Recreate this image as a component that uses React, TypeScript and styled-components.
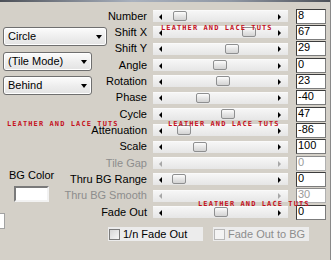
import React from "react";
import styled, { createGlobalStyle } from "styled-components";

const GlobalStyle = createGlobalStyle`
  html, body {
    margin: 0;
    padding: 0;
    background: #d4d0c8;
  }
  body {
    font-family: "Liberation Sans", Arial, sans-serif;
    font-size: 11px;
    color: #000;
  }
`;

const Page = styled.div`
  position: relative;
  width: 331px;
  height: 260px;
  box-sizing: border-box;
  background: #d4d0c8;
  border-right: 1px solid #8a8a8a;
  overflow: hidden;
`;

const TopEdge = styled.div`
  height: 2px;
  background: linear-gradient(90deg, #4c5058, #a9b1be 40%, #8f97a4 70%, #4c5058);
`;

const Grid = styled.div`
  display: grid;
  grid-template-columns: 147px 135px 32px;
  grid-template-rows: repeat(13, 16.33px);
  column-gap: 6px;
  margin-top: 6px;
`;

const LeftStack = styled.div`
  grid-column: 1;
  grid-row: 1 / span 13;
  align-self: start;
  display: flex;
  flex-direction: column;
  align-items: flex-start;
  padding-top: 19px;
`;

const Select = styled.div<{ $w: number; $gap: number }>`
  display: flex;
  align-items: center;
  justify-content: space-between;
  width: ${(p) => p.$w}px;
  height: 19px;
  box-sizing: border-box;
  margin: ${(p) => p.$gap}px 0 0 3px;
  padding: 0 4px 0 4px;
  border: 1px solid #6f6f6f;
  border-radius: 3px;
  background: linear-gradient(#fcfcfc, #ededed 55%, #e3e3e3);
  box-shadow: inset 0 0 0 1px #ffffff;
  line-height: 13px;
`;

const DownArrow = styled.span`
  width: 0;
  height: 0;
  border-top: 4px solid #000;
  border-left: 3.5px solid transparent;
  border-right: 3.5px solid transparent;
`;

const ColorBlock = styled.div`
  display: flex;
  flex-direction: column;
  align-items: center;
  gap: 4px;
  margin: 74px 0 0 9px;
  line-height: 13px;
`;

const ColorWell = styled.div`
  width: 35px;
  height: 16px;
  box-sizing: border-box;
  background: #fff;
  border: 2px solid;
  border-color: #7a7a7a #f2f2f2 #f2f2f2 #7a7a7a;
`;

const CutBox = styled.div`
  width: 5px;
  height: 16px;
  box-sizing: border-box;
  margin-top: 11px;
  background: #fff;
  border: 1px solid #a2a2a2;
  border-left: none;
`;

const Label = styled.div<{ $row: number; $disabled?: boolean }>`
  grid-column: 1;
  grid-row: ${(p) => p.$row};
  justify-self: end;
  align-self: center;
  line-height: 13px;
  white-space: nowrap;
  color: ${(p) => (p.$disabled ? "#8d8d8d" : "#000")};
`;

const Track = styled.div<{ $row: number }>`
  grid-column: 2;
  grid-row: ${(p) => p.$row};
  align-self: center;
  position: relative;
  height: 12px;
  box-sizing: border-box;
  display: flex;
  align-items: center;
  justify-content: space-between;
  padding: 0 7px 0 6px;
  border-top: 1px solid #fafafa;
  background: linear-gradient(#f6f6f6, #eeeeee 50%, #e6e6e6);
`;

const Arrow = styled.span<{ $dir: "left" | "right"; $disabled?: boolean }>`
  width: 0;
  height: 0;
  border-top: 3px solid transparent;
  border-bottom: 3px solid transparent;
  ${(p) => (p.$dir === "left" ? "border-right" : "border-left")}: 3px solid
    ${(p) => (p.$disabled ? "#a8a8a8" : "#000")};
`;

const Thumb = styled.div`
  position: absolute;
  top: 0;
  width: 14px;
  height: 10px;
  box-sizing: border-box;
  border: 1px solid #8e8f90;
  border-radius: 2px;
  background: linear-gradient(#fdfdfd, #e8e8e8 45%, #d3d3d3);
`;

const ValueBox = styled.div<{ $row: number; $disabled?: boolean }>`
  grid-column: 3;
  grid-row: ${(p) => p.$row};
  justify-self: end;
  align-self: center;
  width: 30px;
  height: 15px;
  box-sizing: border-box;
  padding-left: 1px;
  border: 1px solid;
  border-color: ${(p) =>
    p.$disabled ? "#8c8c8c #b0b0b0 #b0b0b0 #8c8c8c" : "#3c3c3c #7c7c7c #7c7c7c #3c3c3c"};
  background: #fff;
  line-height: 11px;
  color: ${(p) => (p.$disabled ? "#9a9a9a" : "#000")};
`;

const CheckRow = styled.div`
  display: flex;
  gap: 10px;
  margin: 7px 0 0 108px;
`;

const CheckItem = styled.label<{ $w: number; $disabled?: boolean }>`
  display: flex;
  align-items: center;
  gap: 3px;
  width: ${(p) => p.$w}px;
  height: 14px;
  background: #ececec;
  line-height: 13px;
  color: ${(p) => (p.$disabled ? "#8d8d8d" : "#000")};
`;

const CheckBox = styled.span<{ $disabled?: boolean }>`
  width: 11px;
  height: 11px;
  margin-left: 1px;
  box-sizing: border-box;
  border: 1px solid ${(p) => (p.$disabled ? "#b8b8b8" : "#7b7b7b")};
  background: ${(p) =>
    p.$disabled ? "#f4f4f4" : "linear-gradient(135deg, #d6d6d6, #f7f7f7)"};
`;

const Watermark = styled.span<{ $x: number; $y: number }>`
  position: absolute;
  left: ${(p) => p.$x}px;
  top: ${(p) => p.$y - 1}px;
  font-family: "DejaVu Sans Mono", "Liberation Mono", monospace;
  font-weight: bold;
  font-size: 7px;
  line-height: 7px;
  letter-spacing: 1.1px;
  color: #c4101c;
  white-space: nowrap;
  pointer-events: none;
`;

interface Row {
  label: string;
  value: string;
  thumb?: number;
  disabled?: boolean;
}

const rows: Row[] = [
  { label: "Number", value: "8", thumb: 20 },
  { label: "Shift X", value: "67", thumb: 89 },
  { label: "Shift Y", value: "29", thumb: 72 },
  { label: "Angle", value: "0", thumb: 60 },
  { label: "Rotation", value: "23", thumb: 63 },
  { label: "Phase", value: "-40", thumb: 43 },
  { label: "Cycle", value: "47", thumb: 68 },
  { label: "Attenuation", value: "-86", thumb: 24 },
  { label: "Scale", value: "100", thumb: 40 },
  { label: "Tile Gap", value: "0", disabled: true },
  { label: "Thru BG Range", value: "0", thumb: 19 },
  { label: "Thru BG Smooth", value: "30", disabled: true },
  { label: "Fade Out", value: "0", thumb: 61 },
];

const marks = [
  { x: 161, y: 26 },
  { x: 7, y: 122 },
  { x: 168, y: 122 },
  { x: 198, y: 202 },
];

const App: React.FC = () => {
  return (
    <Page>
      <GlobalStyle />
      <TopEdge />
      <Grid>
        <LeftStack>
          <Select $w={104} $gap={0}>
            <span>Circle</span>
            <DownArrow />
          </Select>
          <Select $w={89} $gap={6}>
            <span>(Tile Mode)</span>
            <DownArrow />
          </Select>
          <Select $w={89} $gap={5}>
            <span>Behind</span>
            <DownArrow />
          </Select>
          <ColorBlock>
            <span>BG Color</span>
            <ColorWell />
          </ColorBlock>
          <CutBox />
        </LeftStack>

        {rows.map((r, idx) => (
          <React.Fragment key={r.label}>
            <Label $row={idx + 1} $disabled={r.disabled}>
              {r.label}
            </Label>
            <Track $row={idx + 1}>
              <Arrow $dir="left" $disabled={r.disabled} />
              <Arrow $dir="right" $disabled={r.disabled} />
              {r.thumb !== undefined && <Thumb style={{ left: r.thumb }} />}
            </Track>
            <ValueBox $row={idx + 1} $disabled={r.disabled}>
              {r.value}
            </ValueBox>
          </React.Fragment>
        ))}
      </Grid>

      <CheckRow>
        <CheckItem $w={95}>
          <CheckBox />
          1/n Fade Out
        </CheckItem>
        <CheckItem $w={96} $disabled>
          <CheckBox $disabled />
          Fade Out to BG
        </CheckItem>
      </CheckRow>

      {marks.map((m, idx) => (
        <Watermark key={idx} $x={m.x} $y={m.y}>
          LEATHER AND LACE TUTS
        </Watermark>
      ))}
    </Page>
  );
};

export default App;
